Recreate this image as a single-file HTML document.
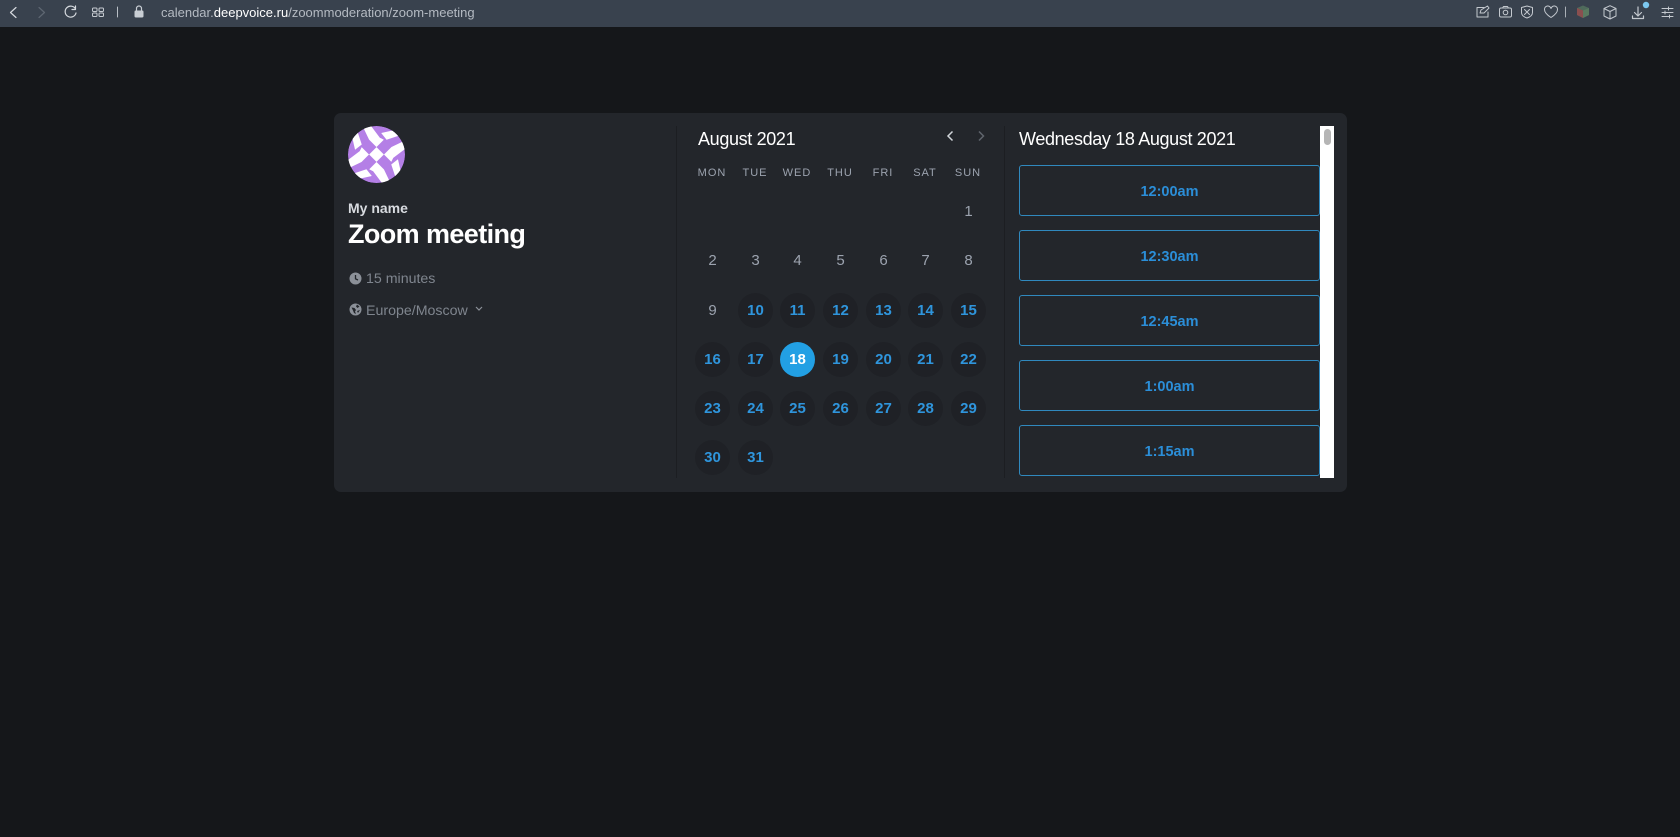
<!DOCTYPE html>
<html><head><meta charset="utf-8"><title>Zoom meeting</title>
<style>
html,body{margin:0;padding:0;width:1680px;height:837px;overflow:hidden;background:#15171a;font-family:"Liberation Sans",sans-serif}
.a{position:absolute}
.t{position:absolute;white-space:nowrap;line-height:1}
#bar{left:0;top:0;width:1680px;height:27px;background:#39424e}
#card{left:334px;top:113px;width:1013px;height:379px;background:#23262b;border-radius:7px}
.d{position:absolute;width:35px;height:35px;margin:-17px 0 0 -17px;border-radius:50%;text-align:center;line-height:35px;font-size:15px;color:#9ca3af}
.o{background:#1f2126;color:#2f95dc;font-weight:bold}
.s{background:#22a0e4;color:#fff;font-weight:bold}
.h{position:absolute;width:40px;margin-left:-20px;text-align:center;top:166.500px;font-size:11px;line-height:12px;letter-spacing:1px;color:#9ca3af}
.b{position:absolute;left:1019px;width:299px;height:49px;border:1.500px solid #3089be;border-radius:3px;text-align:center;line-height:53px;font-size:14.500px;font-weight:bold;color:#2b8ed8}
</style></head><body>
<div id="bar" class="a"></div>
<svg class="a" style="left:0;top:0" width="520" height="27" fill="none" stroke-linecap="round" stroke-linejoin="round">
<path d="M16 7.500l-5.500 5 5.500 5" stroke="#d5d9de" stroke-width="1.200"/>
<path d="M39 7.500l5.500 5-5.500 5" stroke="#5e6772" stroke-width="1.200"/>
<path d="M75.500 9a5.500 5.500 0 1 0 .5 4M75.500 6v3.500H72" stroke="#d5d9de" stroke-width="1.200"/>
<g stroke="#c6cbd1" stroke-width="1"><rect x="92.500" y="8" width="4.500" height="3.500" rx="1"/><rect x="99" y="8" width="4.500" height="3.500" rx="1"/><rect x="92.500" y="13" width="4.500" height="3.500" rx="1"/><rect x="99" y="13" width="4.500" height="3.500" rx="1"/></g>
<path d="M117.500 7v10" stroke="#b9bfc6" stroke-width="1"/>
<rect x="134.500" y="10.500" width="9" height="7" rx="1.200" fill="#c9ced4"/>
<path d="M136.500 10.500V8.500a2.500 2.500 0 0 1 5 0v2" stroke="#c9ced4" stroke-width="1.200"/>
</svg>
<div class="t" style="left:161px;top:5px;font-size:13px;line-height:16px;color:#b4bac2">calendar.<span style="color:#fff">deepvoice.ru</span>/zoommoderation/zoom-meeting</div>
<svg class="a" style="left:1470px;top:0" width="210" height="27" fill="none" stroke="#c4c9cf" stroke-width="1" stroke-linecap="round" stroke-linejoin="round">
<path d="M14 7.500H7V17h11v-5M10 13l1-3 6.500-4 1.500 2-5 5z"/>
<rect x="29.500" y="8" width="12" height="9" rx="1.500"/><circle cx="35.500" cy="12.500" r="2.300"/><path d="M32.500 8l1-1.500h4l1 1.500"/>
<path d="M51.500 7.500l5.500-1.500 5.500 1.500v5c0 3-2.500 4.500-5.500 5.500-3-1-5.500-2.500-5.500-5.500zM54.500 9.500l5 5M59.500 9.500l-5 5"/>
<path d="M81 17.500c-5.500-3.500-6.500-6-6.500-8a3.300 3.300 0 0 1 6.500-1 3.300 3.300 0 0 1 6.500 1c0 2-1 4.500-6.500 8z"/>
<path d="M95.500 7v10" stroke="#aab0b7"/>
<path d="M107 8l6-2.500 6 2.500v7l-6 3-6-3z" fill="#4f6a5b" stroke="none"/><path d="M107 8l6 2.500v7.500l-6-3z" fill="#8a4f4f" stroke="none"/><path d="M113 10.500l6-2.500v7l-6 3z" fill="#5a7a60" stroke="none"/>
<path d="M134 8.500l6-2.800 6 2.800v7.500l-6 3-6-3zM134 8.500l6 3 6-3M140 11.500V19"/>
<path d="M168 7v9M164.500 12.500l3.500 3.500 3.500-3.500M162.500 16v2.500h11V16" stroke-width="1.200"/>
<circle cx="176" cy="5" r="3.200" fill="#7cc8f0" stroke="none"/>
<path d="M192 8.500h11M192 12.500h11M192 16.500h11"/><path d="M198.500 7v3M195 11v3M199.500 15v3"/>
</svg>
<div id="card" class="a"></div>
<svg class="a" style="left:348px;top:126px" width="57" height="57" viewBox="-85 -85 170 170">
<defs><clipPath id="c"><circle r="85"/></clipPath></defs>
<g clip-path="url(#c)"><circle r="85" fill="#b47fe6"/>
<g fill="#fff">
<path d="M-44 -90L-20 -90L10 -50L22 -44L0 -22L-22 -44z"/><path d="M14 -64L58 -74L66 -56L30 -44z"/><path d="M-22 -44L0 -22L-22 -26z" />
<g transform="rotate(90)"><path d="M-44 -90L-20 -90L10 -50L22 -44L0 -22L-22 -44z"/><path d="M14 -64L58 -74L66 -56L30 -44z"/></g>
<g transform="rotate(180)"><path d="M-44 -90L-20 -90L10 -50L22 -44L0 -22L-22 -44z"/><path d="M14 -64L58 -74L66 -56L30 -44z"/></g>
<g transform="rotate(270)"><path d="M-44 -90L-20 -90L10 -50L22 -44L0 -22L-22 -44z"/><path d="M14 -64L58 -74L66 -56L30 -44z"/></g>
</g>
<g fill="#b47fe6"><path d="M-22 -44L0 -22L-22 0L-44 -22z"/><path d="M22 -44L44 -22L22 0L0 -22z"/><path d="M22 0L44 22L22 44L0 22z"/><path d="M-22 0L0 22L-22 44L-44 22z"/></g>
<path d="M0 -22L22 0L0 22L-22 0z" fill="#fff"/>
</g></svg>
<div class="t" style="left:348px;top:199.500px;font-size:14px;font-weight:bold;color:#d8dbe0;line-height:16px">My name</div>
<div class="t" style="left:348px;top:217px;font-size:27px;letter-spacing:-.6px;font-weight:bold;color:#fff;line-height:34px">Zoom meeting</div>
<svg class="a" style="left:349px;top:272px" width="13" height="13" viewBox="0 0 13 13"><circle cx="6.500" cy="6.500" r="6" fill="#8b9098"/><path d="M6.500 3v3.800l2.500 1.200" stroke="#23262b" stroke-width="1.300" fill="none"/></svg>
<div class="t" style="left:366px;top:271px;font-size:14.200px;line-height:16px;color:#7f858e">15 minutes</div>
<svg class="a" style="left:349px;top:303px" width="13" height="13" viewBox="0 0 13 13"><circle cx="6.500" cy="6.500" r="6" fill="#8b9098"/><path d="M2.500 4.500l3 .5 1.500 2-1 1.500 1 2.500-2-1-1-2.500zM8 1.500l2.500 2-2 1.500-1.500-1.500zM11 7l-2 3-1-2z" fill="#23262b"/></svg>
<div class="t" style="left:366px;top:303px;font-size:14.200px;line-height:16px;color:#7f858e">Europe/Moscow</div>
<svg class="a" style="left:474px;top:305px" width="10" height="8" fill="none"><path d="M2 2l3 3 3-3" stroke="#8b9098" stroke-width="1.200"/></svg>
<div class="a" style="left:676px;top:126px;width:1px;height:352px;background:#1c1e22"></div>
<div class="a" style="left:1004px;top:126px;width:1px;height:352px;background:#1c1e22"></div>
<div class="t" style="left:698px;top:128px;font-size:18px;letter-spacing:-.35px;line-height:22px;color:#fff">August 2021</div>
<svg class="a" style="left:940px;top:127px" width="50" height="18" fill="none" stroke-width="1.500"><path d="M12.500 4.500L8 9l4.500 4.500" stroke="#d1d5da"/><path d="M39 4.500L43.500 9 39 13.500" stroke="#5f646c"/></svg>
<div class="h" style="left:712px">MON</div><div class="h" style="left:755px">TUE</div><div class="h" style="left:797px">WED</div><div class="h" style="left:840px">THU</div><div class="h" style="left:883px">FRI</div><div class="h" style="left:925px">SAT</div><div class="h" style="left:968px">SUN</div>
<div class="d" style="left:968px;top:211px">1</div>
<div class="d" style="left:712px;top:260px">2</div><div class="d" style="left:755px;top:260px">3</div><div class="d" style="left:797px;top:260px">4</div><div class="d" style="left:840px;top:260px">5</div><div class="d" style="left:883px;top:260px">6</div><div class="d" style="left:925px;top:260px">7</div><div class="d" style="left:968px;top:260px">8</div>
<div class="d" style="left:712px;top:310px">9</div><div class="d o" style="left:755px;top:310px">10</div><div class="d o" style="left:797px;top:310px">11</div><div class="d o" style="left:840px;top:310px">12</div><div class="d o" style="left:883px;top:310px">13</div><div class="d o" style="left:925px;top:310px">14</div><div class="d o" style="left:968px;top:310px">15</div>
<div class="d o" style="left:712px;top:359px">16</div><div class="d o" style="left:755px;top:359px">17</div><div class="d s" style="left:797px;top:359px">18</div><div class="d o" style="left:840px;top:359px">19</div><div class="d o" style="left:883px;top:359px">20</div><div class="d o" style="left:925px;top:359px">21</div><div class="d o" style="left:968px;top:359px">22</div>
<div class="d o" style="left:712px;top:408px">23</div><div class="d o" style="left:755px;top:408px">24</div><div class="d o" style="left:797px;top:408px">25</div><div class="d o" style="left:840px;top:408px">26</div><div class="d o" style="left:883px;top:408px">27</div><div class="d o" style="left:925px;top:408px">28</div><div class="d o" style="left:968px;top:408px">29</div>
<div class="d o" style="left:712px;top:457px">30</div><div class="d o" style="left:755px;top:457px">31</div>
<div class="t" style="left:1019px;top:128px;font-size:18px;letter-spacing:-.35px;line-height:22px;color:#fff">Wednesday 18 August 2021</div>
<div class="b" style="top:165px">12:00am</div>
<div class="b" style="top:230px">12:30am</div>
<div class="b" style="top:295px">12:45am</div>
<div class="b" style="top:360px">1:00am</div>
<div class="b" style="top:425px">1:15am</div>
<div class="a" style="left:1320px;top:126px;width:14px;height:352px;background:#fff"></div>
<div class="a" style="left:1324px;top:129px;width:7px;height:16px;border-radius:4px;background:#b5b5b5"></div>
</body></html>
